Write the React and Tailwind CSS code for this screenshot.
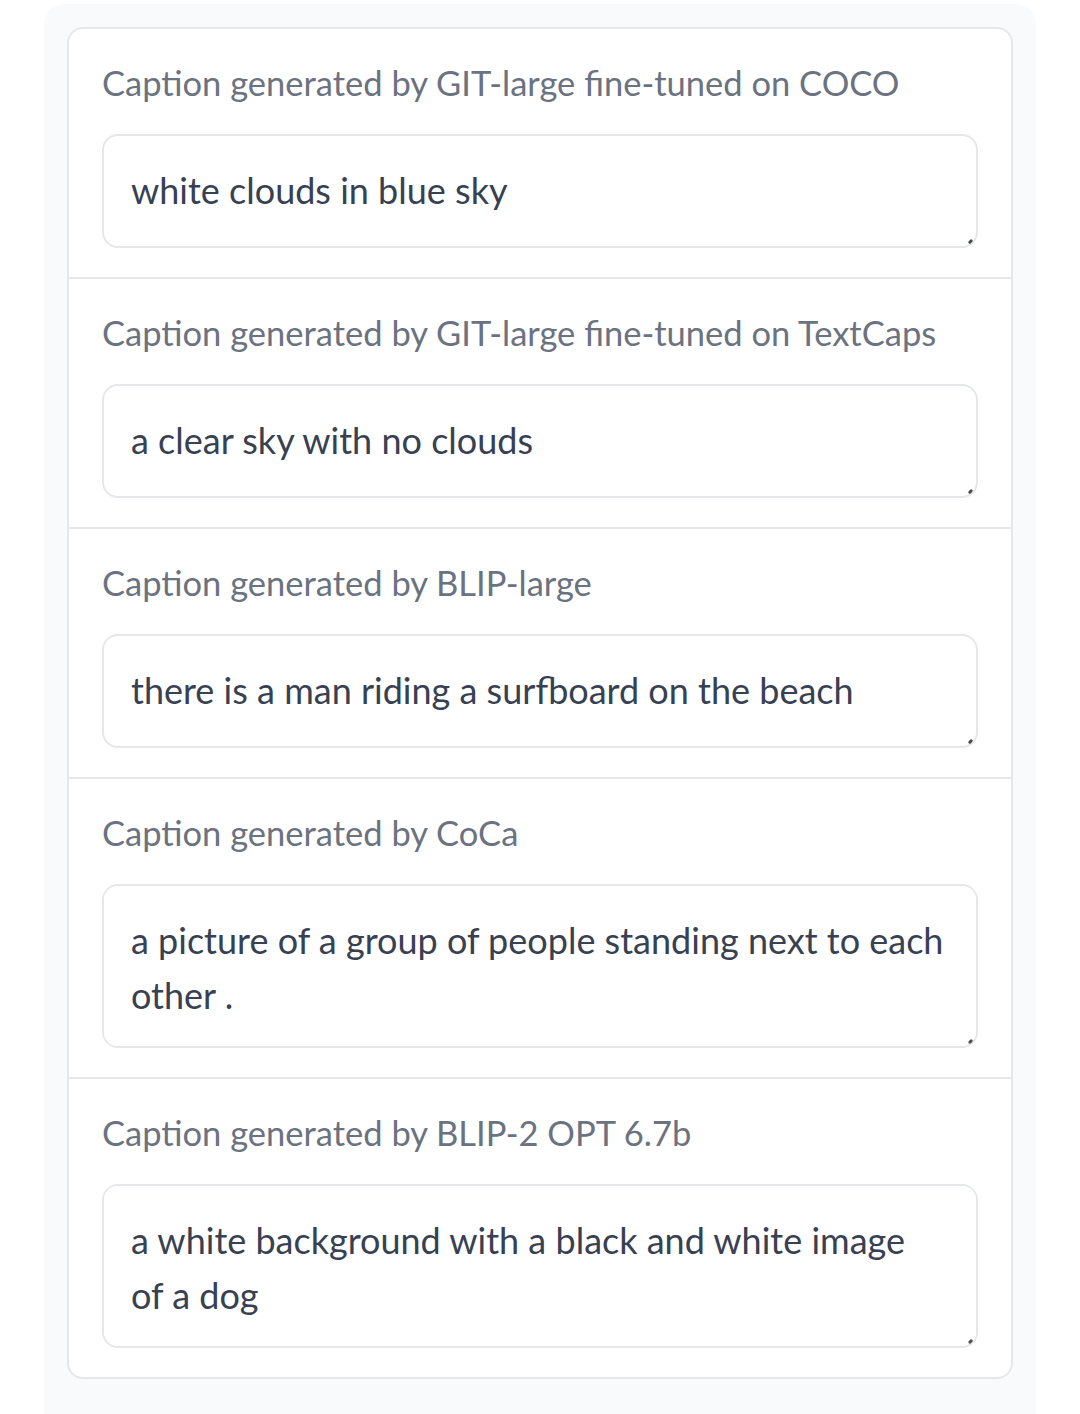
import React from "react";

const CAPTIONS = [
  { model: "GIT-large fine-tuned on COCO", text: "white clouds in blue sky", rows: 1 },
  { model: "GIT-large fine-tuned on TextCaps", text: "a clear sky with no clouds", rows: 1 },
  { model: "BLIP-large", text: "there is a man riding a surfboard on the beach", rows: 1 },
  { model: "CoCa", text: "a picture of a group of people standing next to each other .", rows: 2 },
  // line break kept where the original box wrapped it
  { model: "BLIP-2 OPT 6.7b", text: "a white background with a black and white image\nof a dog", rows: 2 },
];

const CaptionBox = ({ model, text, rows, last }) => (
  <div className={`px-[33px] pt-[30px] pb-[29px] ${last ? "" : "border-b-2 border-[#e5e7eb]"}`}>
    <label className="block whitespace-nowrap text-[34.5px] leading-[48px] text-[#6b7280]">
      Caption generated by {model}
    </label>
    <div className="relative mt-[27px]">
      <textarea
        readOnly
        rows={rows}
        value={text}
        className={`block w-full resize-none rounded-[16px] border-2 border-[#e5e7eb] bg-white pl-[27px] pr-[18px] py-[27px] text-[36px] leading-[55px] text-[#374151] outline-none ${
          rows === 2 ? "h-[164px]" : "h-[114px]"
        }`}
      />
      {/* resize grip peeking past the rounded corner */}
      <span className="absolute bottom-[5px] right-[5px] h-[3px] w-[5px] -rotate-45 rounded-full bg-[#4b4b4b]" />
    </div>
  </div>
);

export default function App() {
  return (
    <div className="min-h-screen bg-white pt-[4px]" style={{ fontFamily: "Lato, 'Noto Sans', sans-serif" }}>
      <div className="ml-[44px] w-[992px] rounded-t-[20px] bg-[#f9fafb] px-[23px] pt-[23px] pb-[40px]">
        <div className="rounded-[16px] border-2 border-[#e5e7eb] bg-white">
          {CAPTIONS.map((c, i) => (
            <CaptionBox key={c.model} {...c} last={i === CAPTIONS.length - 1} />
          ))}
        </div>
      </div>
    </div>
  );
}
